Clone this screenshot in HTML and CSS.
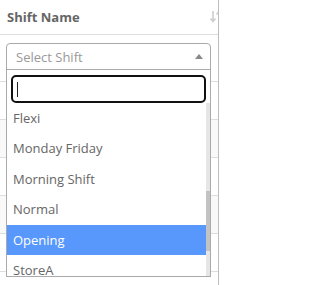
FILE: index.html
```html
<!DOCTYPE html>
<html>
<head>
<meta charset="utf-8">
<link rel="stylesheet" href="styles.css">
</head>
<body>
<div class="frame">
  <div class="th">
    <span class="th-label">Shift Name</span>
    <svg class="sort" width="12" height="13" viewBox="0 0 12 13">
      <path d="M3 1v10M0.5 8.5L3 11.5L5.5 8.5" fill="none" stroke="#cfcfcf" stroke-width="1.6"/>
      <path d="M9 12V2M6.5 4.5L9 1.5L11.5 4.5" fill="none" stroke="#cfcfcf" stroke-width="1.6"/>
    </svg>
  </div>
  <div class="filter-row">
    <div class="select">
      <span class="placeholder">Select Shift</span>
      <span class="arrow"></span>
    </div>
  </div>
  <div class="row"></div>
  <div class="row alt"></div>
  <div class="row"></div>
  <div class="row alt"></div>
  <div class="row"></div>

  <div class="dropdown">
    <div class="search-wrap">
      <div class="search"><span class="caret"></span></div>
    </div>
    <div class="results">
      <ul class="options">
        <li class="opt">Flexi</li>
        <li class="opt">Monday Friday</li>
        <li class="opt">Morning Shift</li>
        <li class="opt">Normal</li>
        <li class="opt active">Opening</li>
        <li class="opt">StoreA</li>
      </ul>
      <div class="scrollbar"><div class="thumb"></div></div>
    </div>
  </div>
</div>
</body>
</html>
```

FILE: styles.css
```css
html, body {
  margin: 0;
  padding: 0;
  background: #fff;
}
body {
  width: 220px;
  height: 285px;
  overflow: hidden;
  font-family: "Open Sans", "Liberation Sans", sans-serif;
  font-size: 13px;
}
.frame {
  position: relative;
  box-sizing: border-box;
  width: 219px;
  height: 285px;
  border-right: 1px solid #bdbdbd;
  overflow: hidden;
}
.th {
  box-sizing: border-box;
  height: 35px;
  border-bottom: 1px solid #dedede;
  display: flex;
  align-items: center;
  padding-left: 7px;
  position: relative;
}
.th-label {
  font-weight: 700;
  color: #666;
  line-height: 18px;
  margin-top: -1px;
}
.sort {
  position: absolute;
  left: 210px;
  top: 10px;
}
.filter-row {
  box-sizing: border-box;
  height: 47px;
  padding: 8px 7px 0 6px;
  border-bottom: 1px solid #dedede;
}
.select {
  box-sizing: border-box;
  height: 27px;
  border: 1px solid #aaa;
  border-radius: 4px 4px 0 0;
  display: flex;
  align-items: center;
  justify-content: space-between;
  padding: 0 7px 0 9px;
}
.placeholder {
  color: #999;
  line-height: 18px;
}
.arrow {
  width: 0;
  height: 0;
  border-left: 4px solid transparent;
  border-right: 4px solid transparent;
  border-bottom: 5px solid #888;
  margin-top: -1px;
}
.row {
  box-sizing: border-box;
  height: 38px;
  border-bottom: 1px solid #dedede;
}
.row.alt {
  background: #f9f9f9;
}
.dropdown {
  position: absolute;
  left: 6px;
  top: 69px;
  width: 205px;
  height: 208px;
  box-sizing: border-box;
  border: 1px solid #aaa;
  background: #fff;
  display: flex;
  flex-direction: column;
}
.search-wrap {
  padding: 5px 4px 0 4px;
}
.search {
  box-sizing: border-box;
  height: 28px;
  border: 2px solid #111;
  border-radius: 5px;
  display: flex;
  align-items: center;
  padding-left: 4px;
}
.caret {
  width: 1px;
  height: 15px;
  background: #222;
}
.results {
  flex: 1;
  display: flex;
  overflow: hidden;
}
.options {
  list-style: none;
  margin: 0;
  padding: 0;
  flex: 1;
}
.opt {
  height: 30.4px;
  line-height: 30.4px;
  padding-left: 6px;
  color: #666;
  white-space: nowrap;
}
.opt.active {
  background: #5897fb;
  color: #fff;
}
.scrollbar {
  width: 4px;
  background: #e6e6e6;
  position: relative;
}
.thumb {
  position: absolute;
  left: 0;
  right: 0;
  top: 88px;
  height: 60px;
  background: #c3c3c3;
}
```
